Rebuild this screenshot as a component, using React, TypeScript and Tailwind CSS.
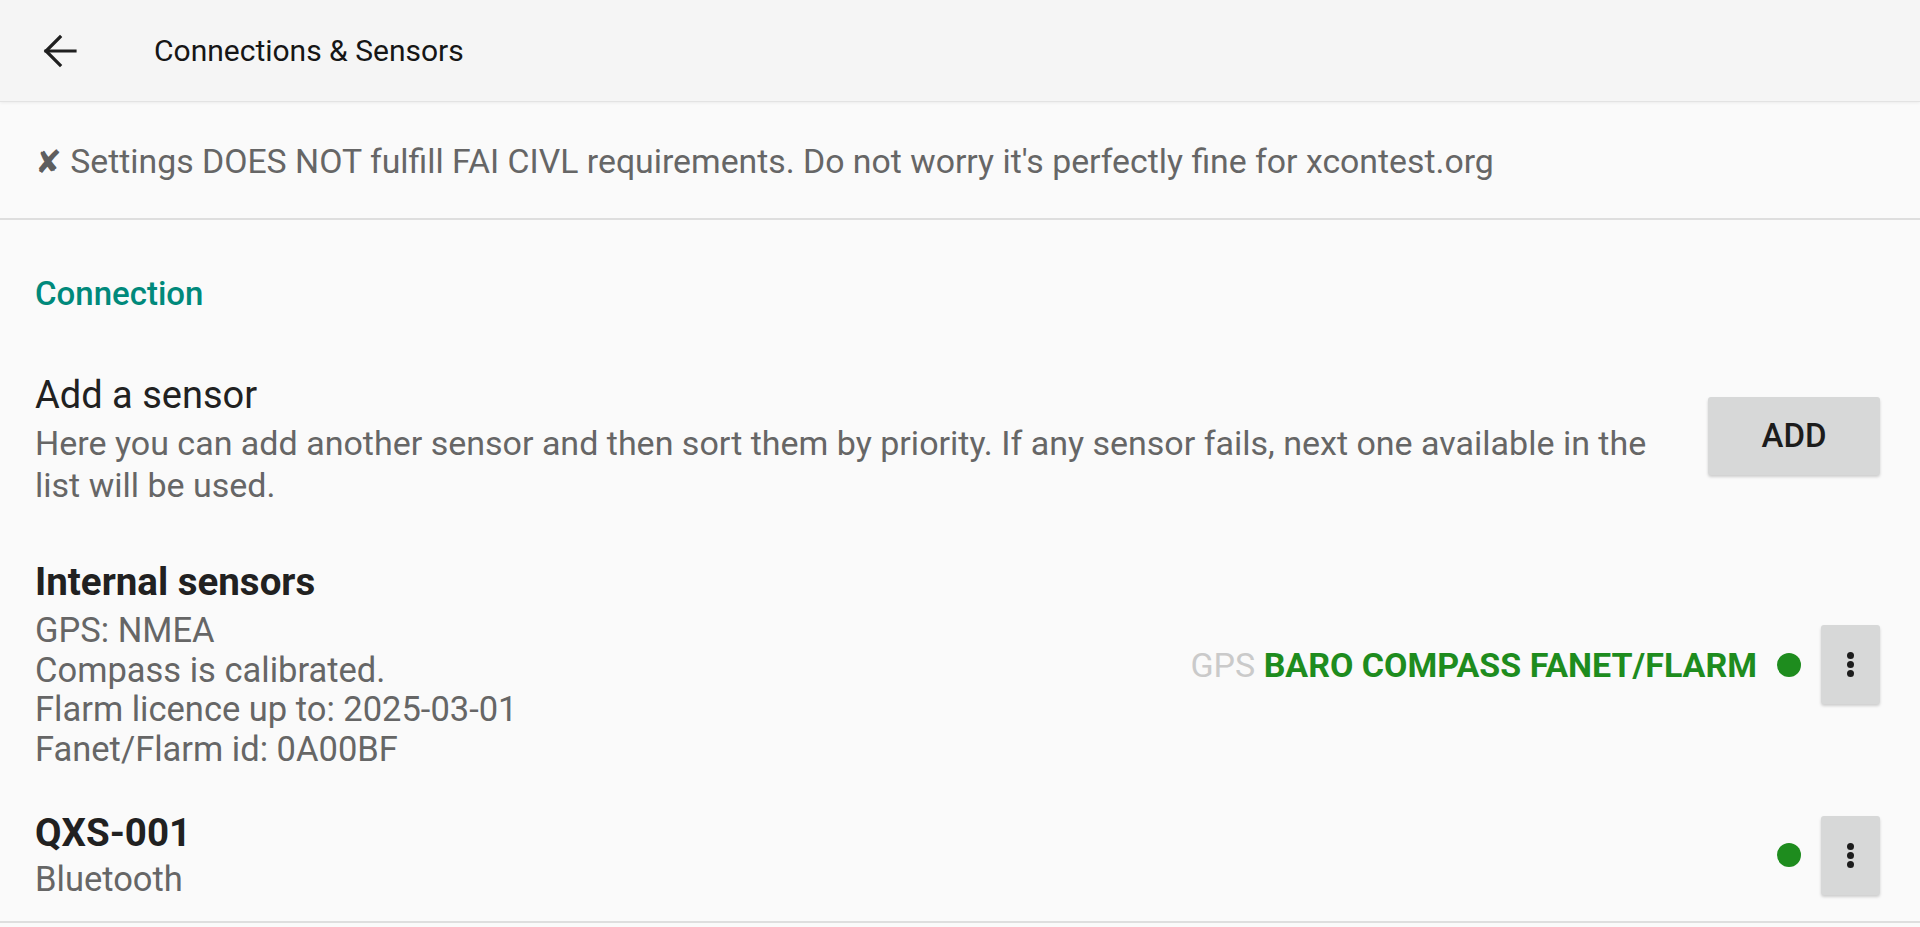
import React from "react";

const details = [
  "GPS: NMEA",
  "Compass is calibrated.",
  "Flarm licence up to: 2025-03-01",
  "Fanet/Flarm id: 0A00BF",
];

function MenuButton() {
  return (
    <button className="flex h-[79px] w-[59px] flex-col items-center justify-center gap-[2px] rounded-[3px] bg-[#d7d8d8] shadow-[0_2px_3px_rgba(0,0,0,0.18)]">
      <span className="h-[7px] w-[7px] rounded-full bg-[#1c1c1c]" />
      <span className="h-[7px] w-[7px] rounded-full bg-[#1c1c1c]" />
      <span className="h-[7px] w-[7px] rounded-full bg-[#1c1c1c]" />
    </button>
  );
}

function StatusDot() {
  return <span className="inline-block h-[24px] w-[24px] shrink-0 rounded-full bg-[#1e8c1e]" />;
}

export default function App() {
  return (
    <div className="min-h-screen bg-[#fafafa] font-['Roboto',sans-serif] text-[#212121]">
      {/* toolbar */}
      <header className="flex h-[102px] items-center border-b border-[#e3e3e3] bg-[#f5f5f5] shadow-[0_1px_3px_rgba(0,0,0,0.06)]">
        <svg
          className="ml-[43px] h-[34px] w-[34px]"
          viewBox="0 0 34 34"
          fill="none"
          stroke="#1f1f1f"
          strokeWidth="3.2"
          strokeLinecap="square"
        >
          <path d="M3 17H32" />
          <path d="M17 3L3 17L17 31" strokeLinejoin="miter" />
        </svg>
        <h1 className="ml-[77px] text-[30px] font-normal leading-[36px] text-[#161616]">
          Connections &amp; Sensors
        </h1>
      </header>

      {/* FAI warning */}
      <div className="box-border h-[118px] border-b-2 border-[#dedede] px-[35px] pt-[40px] text-[33.8px] leading-[40px] text-[#666666]">
        <span className="font-['DejaVu_Sans',sans-serif] text-[32px] font-bold text-[#5e5e5e]">✘</span> Settings DOES
        NOT fulfill FAI CIVL requirements. Do not worry it's perfectly fine for xcontest.org
      </div>

      <div className="pl-[35px] pr-[40px]">
        <div className="mt-[54px] text-[33px] font-medium leading-[40px] text-[#00897b]">Connection</div>

        {/* add a sensor */}
        <div className="mt-[59px] flex items-start">
          <div className="flex-1 pr-[40px]">
            <div className="text-[38px] leading-[44px] text-[#212121]">Add a sensor</div>
            <div className="mt-[5px] text-[34px] leading-[42px] text-[#666666]">
              Here you can add another sensor and then sort them by priority. If any sensor fails, next one
              available in the list will be used.
            </div>
          </div>
          <button className="mt-[24px] h-[78px] w-[172px] shrink-0 rounded-[3px] bg-[#d7d8d8] text-[33px] font-medium text-[#1c1c1c] shadow-[0_2px_3px_rgba(0,0,0,0.18)]">
            ADD
          </button>
        </div>

        {/* internal sensors */}
        <div className="mt-[54px] flex items-center">
          <div className="flex-1">
            <div className="text-[38.5px] font-bold leading-[44px] text-[#212121]">Internal sensors</div>
            <div className="mt-[7px] text-[34.5px] leading-[39.5px] text-[#666666]">
              {details.map((d) => (
                <div key={d}>{d}</div>
              ))}
            </div>
          </div>
          <div className="flex items-center gap-[20px]">
            <div className="text-[34px] leading-[40px]">
              <span className="text-[#cacaca]">GPS</span>{" "}
              <span className="font-bold text-[#1e8c1e]">BARO COMPASS FANET/FLARM</span>
            </div>
            <StatusDot />
            <MenuButton />
          </div>
        </div>

        {/* external sensor */}
        <div className="mt-[42px] flex items-center">
          <div className="flex-1">
            <div className="text-[38.5px] font-bold leading-[44px] text-[#212121]">QXS-001</div>
            <div className="mt-[4px] text-[34.5px] leading-[40px] text-[#666666]">Bluetooth</div>
          </div>
          <div className="flex items-center gap-[20px]">
            <StatusDot />
            <MenuButton />
          </div>
        </div>
      </div>

      <div className="mt-[22px] border-b-2 border-[#dedede]" />
    </div>
  );
}
